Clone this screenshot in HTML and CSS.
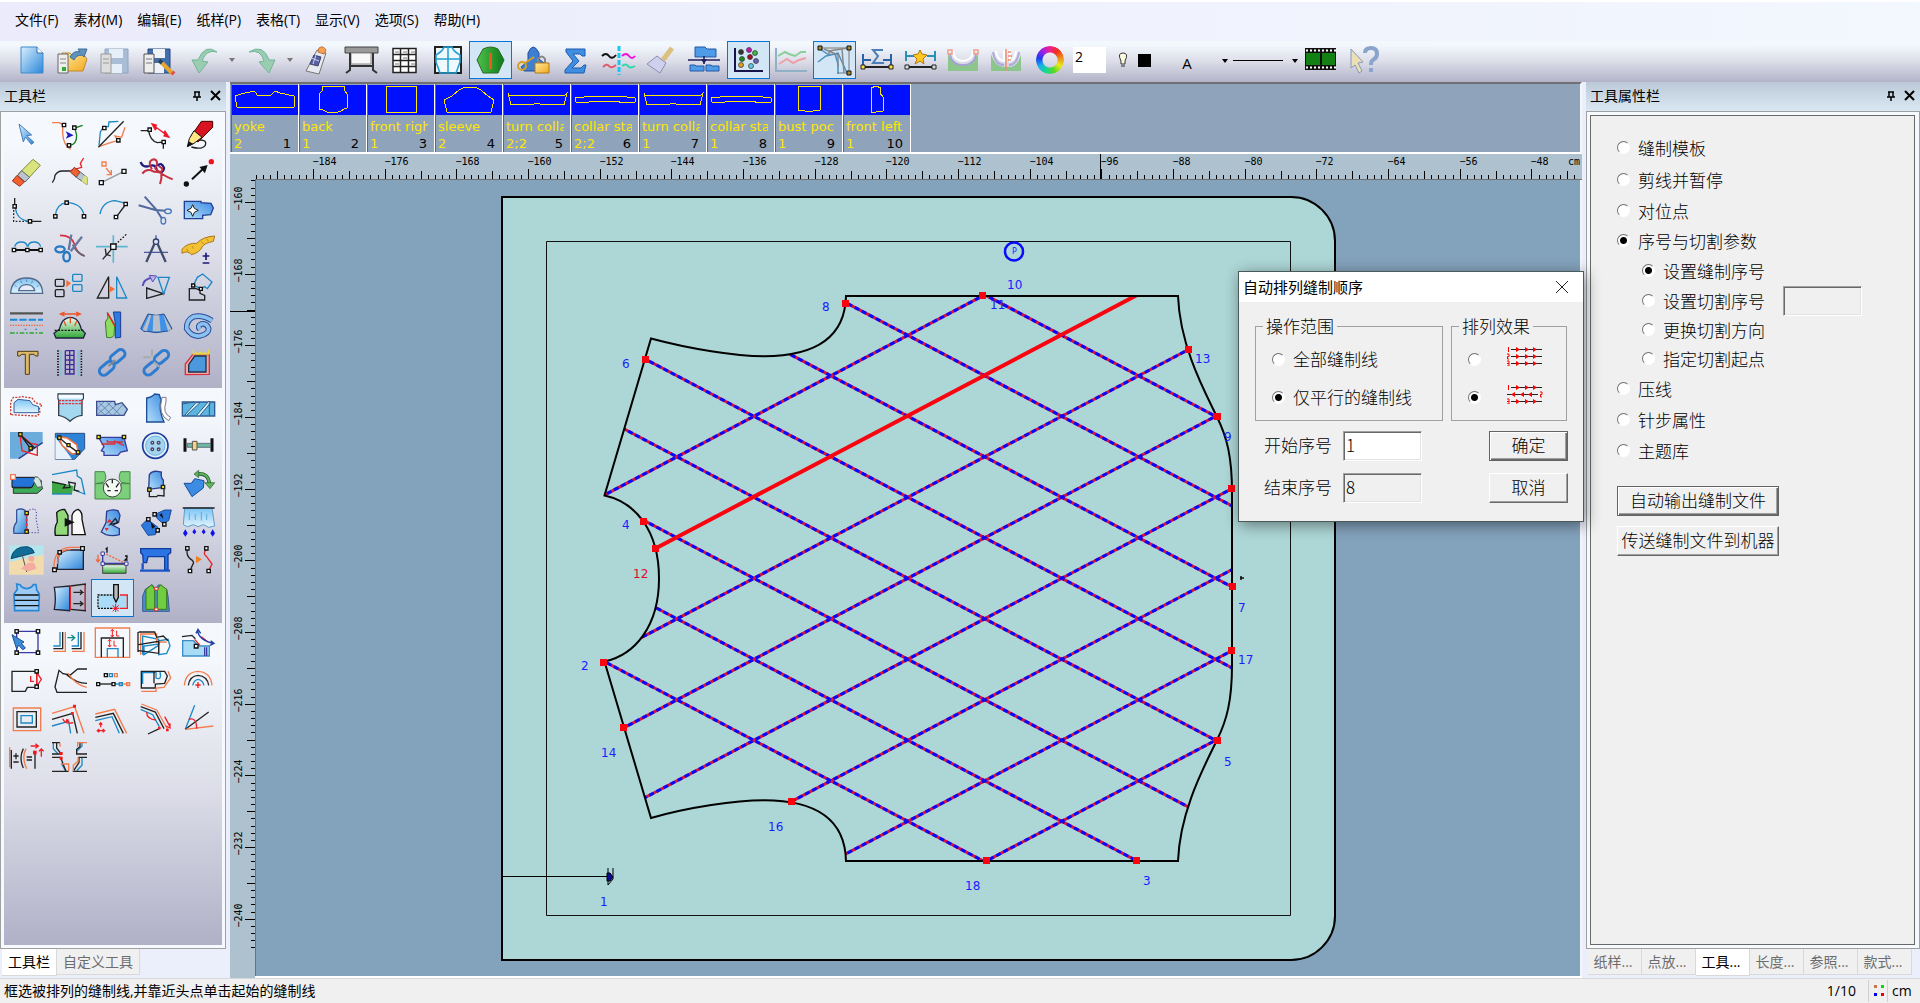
FILE: index.html
```html
<!DOCTYPE html>
<html lang="zh-CN">
<head>
<meta charset="utf-8">
<title>缝制模板</title>
<link rel="stylesheet" href="styles.css">
</head>
<body>
<svg class="defs" width="0" height="0" aria-hidden="true">
  <defs>
    <linearGradient id="blue" x1="0" y1="0" x2="1" y2="1"><stop offset="0" stop-color="#d8effc"/><stop offset="1" stop-color="#2b86dc"/></linearGradient>
    <linearGradient id="deep" x1="1" y1="0" x2="0" y2="1"><stop offset="0" stop-color="#3c8ae4"/><stop offset="1" stop-color="#b4e0f8"/></linearGradient>
    <linearGradient id="sky" x1="0" y1="0" x2="0" y2="1"><stop offset="0" stop-color="#7cc4f4"/><stop offset="1" stop-color="#e2f5fd"/></linearGradient>
    <linearGradient id="green" x1="0" y1="0" x2="0" y2="1"><stop offset="0" stop-color="#f4fbf2"/><stop offset="1" stop-color="#2fa836"/></linearGradient>
    <linearGradient id="grass" x1="0" y1="0" x2="1" y2="0"><stop offset="0" stop-color="#4fc04a"/><stop offset="1" stop-color="#0e7a1c"/></linearGradient>
    <linearGradient id="gold" x1="0" y1="0" x2="1" y2="1"><stop offset="0" stop-color="#ffe9a0"/><stop offset="1" stop-color="#f2a91c"/></linearGradient>
  </defs>
</svg>

<nav class="menubar">
  <a href="#file">文件(F)</a><a href="#material">素材(M)</a><a href="#edit">编辑(E)</a><a href="#pattern">纸样(P)</a><a href="#table">表格(T)</a><a href="#view">显示(V)</a><a href="#option">选项(S)</a><a href="#help">帮助(H)</a>
</nav>

<div class="toolbar">
  <button aria-label="新建"><svg viewBox="9 42 43 38"><path d="M21 48h16l6 6v20H21z" fill="url(#blue)" stroke="#3c8ccc" stroke-width="1"/><path d="M37 48v6h6" fill="#fff" stroke="#3c6ca0" stroke-width="1"/></svg></button>
  <button aria-label="打开"><svg viewBox="52 42 43 38"><path d="M62 54h8l2 2h12l3 4-4 12H66z" fill="url(#gold)" stroke="#c08a2c" stroke-width="1"/><path d="M70 58q4-7 10-5l-2-3h9l-3 8-2-2q-6 0-8 5z" fill="#5f93bd" stroke="#3f6f98" stroke-width="1"/><path d="M58 55h10v19H58z" fill="#eee" stroke="#666" stroke-width="1"/><path d="M60 60h6M60 64h6" stroke="#888" stroke-width="1"/><path d="M62 68h4v4h-4z" fill="#3a3" stroke="none"/></svg></button>
  <button aria-label="保存"><svg viewBox="95 42 43 38"><path d="M105 50h23v24h-23z" fill="#a9bed6" stroke="#8fa4c0" stroke-width="1"/><path d="M109 50h14v9h-14zM110 65h12v9h-12z" fill="#e6eef8" stroke="none"/><path d="M101 55h10v19h-10z" fill="#ddd" stroke="#999" stroke-width="1"/><path d="M103 60h6M103 64h6" stroke="#999" stroke-width="1"/></svg></button>
  <button aria-label="另存"><svg viewBox="138 42 43 38"><path d="M148 50h22v24h-22z" fill="#3f6fae" stroke="#27477c" stroke-width="1"/><path d="M153 50h12v9h-12zM153 64h11v10h-11z" fill="#eef3fa" stroke="none"/><path d="M144 55h10v19h-10z" fill="#eee" stroke="#555" stroke-width="1"/><path d="M146 60h6M146 64h6" stroke="#777" stroke-width="1"/><path d="M159 61l13 13" stroke="#e9a62c" stroke-width="4"/><path d="M159 61l3 3" stroke="#246" stroke-width="4"/><path d="M172 73l2 2" stroke="#e05050" stroke-width="4"/></svg></button>
  <button aria-label="撤销"><svg viewBox="181 42 43 38"><path d="M217 53q-12-9-19 8h-6l7 13 9-11-6-1q4-12 15-9z" fill="#98cdb0" stroke="#74b49a" stroke-width="1"/></svg></button>
  <button class="caret undo-caret" aria-label="撤销列表"><svg viewBox="0 0 8 6"><path d="M1 1h6L4 5z" fill="#777" stroke="none"/></svg></button>
  <button aria-label="重做"><svg viewBox="240 42 43 38"><path d="M249 53q14-9 20 8h6l-6 13-10-11 5-1q-3-12-15-9z" fill="#98cdb0" stroke="#74b49a" stroke-width="1"/></svg></button>
  <button class="caret redo-caret" aria-label="重做列表"><svg viewBox="0 0 8 6"><path d="M1 1h6L4 5z" fill="#777" stroke="none"/></svg></button>
  <button aria-label="数化板"><svg viewBox="297 42 43 38"><path d="M317 51l9 3-7 21-13-3z" fill="#e6e9f0" stroke="#777" stroke-width="1"/><path d="M314 56l7 2-3 9-8-2z" fill="#5660a4" stroke="#446" stroke-width="1"/><path d="M319 49q4-3 7 2l-2 4-6-2z" fill="#f7a354" stroke="#c07030" stroke-width="1"/><path d="M311 59l8 3M316 56l-3 9" stroke="#cfd4ee" stroke-width="1"/></svg></button>
  <button aria-label="绘图仪"><svg viewBox="340 42 43 38"><path d="M345 48h33v6h-33z" fill="#999" stroke="#444" stroke-width="1"/><path d="M351 54h20v11h-20z" fill="#f8f8f8" stroke="#888" stroke-width="1"/><path d="M350 54v17l-4 3M373 54v17l4 3M349 67h25" stroke="#333"/></svg></button>
  <button aria-label="表格"><svg viewBox="383 42 43 38"><path d="M393 49.500h23v24h-23zM400.500 49v25M408.500 49v25M393 55.500h23M393 61.500h23M393 67.500h23" fill="#fff" stroke="#222" stroke-width="1.500"/><path d="M395 53h4M403 53h4M411 53h4M395 65h4M403 59h4M411 65h4" stroke="#777" stroke-width="1"/></svg></button>
  <button aria-label="纸样"><svg viewBox="426 42 43 38"><path d="M435 48h26v26h-26z" fill="#eef8fd" stroke="#222"/><path d="M444 48h8q1 4 8 8v7l-4 11h-16l-4-11v-7q7-4 8-8zM448 48v26M436 60h24" stroke="#22a0d0" stroke-width="1.500"/></svg></button>
  <button class="on" aria-label="单片"><svg viewBox="469 42 43 38"><path d="M483 50q8-4 15 0l6 11-6 13h-15l-6-13z" fill="url(#grass)" stroke="#2a6a20" stroke-width="1"/><path d="M490.500 54v16" stroke="#f2561c" stroke-width="3"/></svg></button>
  <button aria-label="锁定"><svg viewBox="512 42 43 38"><path d="M528 54q5-12 11 0v6l5 4v8h-20l-3-4 7-6z" fill="#3e7fd2" stroke="#1e4f9c" stroke-width="1"/><circle cx="522" cy="67" r="4" fill="none" stroke="#d8a020"/><path d="M525 64l9-6" stroke="#d8a020"/><path d="M538 64v-4q4-5 7 0v4" stroke="#888"/><path d="M535 64h14v10h-14z" fill="url(#gold)" stroke="#b07a18" stroke-width="1"/></svg></button>
  <button aria-label="求和"><svg viewBox="555 42 43 38"><path d="M566 50h19v7h-3l-2-2h-7l6 7-7 7h9l3-3h2l-2 8h-19v-3l8-9-7-9z" fill="#3f8ee0" stroke="#1b5cb0" stroke-width="1"/></svg></button>
  <button aria-label="曲线对称"><svg viewBox="598 42 43 38"><path d="M619 47v29" stroke="#18c8f0" stroke-width="3" stroke-dasharray="5 2"/><path d="M602 57q4-4 7 0t7-1" stroke="#111"/><path d="M622 57q4-4 7 0t6 0" stroke="#f010e0"/><path d="M603 68q4-4 6-1t7-1" stroke="#e05a6c"/><path d="M622 67q4-3 6 0t7 0" stroke="#30d8a8"/></svg></button>
  <button aria-label="刷子"><svg viewBox="641 42 43 38"><path d="M672 49l-9 12" stroke="#dcc080" stroke-width="5"/><path d="M657 57l9 7-6 10-13-9z" fill="#cfd0ee" stroke="#8c8cae" stroke-width="1"/></svg></button>
  <button aria-label="合并"><svg viewBox="684 42 43 38"><path d="M695 48h10l2 2h9v8h-21zM690 66h5l1 1h8v5h-14zM706 66h5l1 1h7v5h-13z" fill="#4e9be8" stroke="#2259a6" stroke-width="1"/><path d="M688 61h32M704 57v8" stroke="#20205c" stroke-width="1.500"/><path d="M701 60h6l-3 5z" fill="#20205c" stroke="none"/></svg></button>
  <button class="on" aria-label="放码点"><svg viewBox="727 42 43 38"><path d="M735 49v23h28" stroke="#15154c"/><g stroke="#333" stroke-width=".7"><circle cx="741" cy="53" r="2.500" fill="#333"/><circle cx="749" cy="51" r="2.500" fill="#c018b0"/><circle cx="755" cy="54" r="2.500" fill="#40b848"/><circle cx="742" cy="60" r="2.500" fill="#188c20"/><circle cx="750" cy="58" r="2.500" fill="#a01028"/><circle cx="756" cy="62" r="2.500" fill="#6860b8"/><circle cx="741" cy="66" r="2.500" fill="#e0a020"/><circle cx="751" cy="67" r="2.500" fill="#60c8e0"/></g></svg></button>
  <button aria-label="线条"><svg viewBox="770 42 43 38"><path d="M776 49v23h31" stroke="#8fb0c6"/><path d="M778 57l7-4 4 2 6 2 6-4h5" stroke="#88cf98"/><path d="M779 65l8-5 6 4 6-3 7-2" stroke="#eea0a8"/></svg></button>
  <button class="on" aria-label="点放码"><svg viewBox="813 42 43 38"><path d="M820 49h29v25h-12" stroke="#777" stroke-width="1"/><path d="M818 63l8-6 9-2 3 10v10M820 50l9 6 9-2 9 20" stroke="#4a90c0" stroke-width="1.500"/><path d="M829 56v-4l19-3M824 50l14 6v12M842 50l2 24" stroke="#888" stroke-width="1.500"/><path d="M818 47h4v4h-4zM847 47h4v4h-4zM847 72h4v4h-4z" fill="#a48c30" stroke="#111" stroke-width="1"/></svg></button>
  <button aria-label="测量"><svg viewBox="856 42 43 38"><path d="M863 55v11M891 55v11M863 61h8M883 61h8" stroke="#2a62a8"/><path d="M883 51h-10l5 6-5 7h11" stroke="#4a7fb8"/><path d="M863 68h28" stroke="#222"/><path d="M861 66h4v4h-4zM889 66h4v4h-4z" fill="#ffe040" stroke="#222" stroke-width="1"/></svg></button>
  <button aria-label="标记"><svg viewBox="899 42 43 38"><path d="M906 52v10M935 52v10M906 57h8M927 57h8" stroke="#2a90b8"/><path d="M920 51l2 4 5 1-4 4 1 5-4-3-5 3 2-5-4-4 5-1z" fill="#ffc820" stroke="#b07810" stroke-width="1"/><path d="M907 68h27" stroke="#222"/><path d="M905 66h4v4h-4zM932 66h4v4h-4z" fill="#ddd" stroke="#222" stroke-width="1"/></svg></button>
  <button aria-label="圆弧"><svg viewBox="942 42 43 38"><path d="M948 55q15 22 30 0v17h-30z" fill="#8cc68c" stroke="none"/><path d="M950 54q1 12 13 12t13-12" stroke="#a8a0d8"/><path d="M953 52q1 10 10 10t10-10" stroke="#fff"/><path d="M948 51h4v4h-4zM974 51h4v4h-4z" stroke="#f0a088" stroke-width="1.500"/></svg></button>
  <button aria-label="剖开圆弧"><svg viewBox="985 42 43 38"><path d="M991 55q4 13 13 13h5q9 0 12-13v17h-30z" fill="#8cc68c" stroke="none"/><path d="M993 53q2 13 11 13M1019 53q-2 13-10 13" stroke="#b0a8dc"/><path d="M996 52q1 9 8 10V51M1016 52q-1 9-6 10V51" stroke="#fff"/><path d="M1006 50v22M1008 53h3M1008 57h4M1008 61h3" stroke="#e89070" stroke-width="1.500"/></svg></button>
  <button aria-label="颜色"><span class="wheel"></span></button>
  <input class="size" type="text" value="2" aria-label="线宽">
  <button class="bulb" aria-label="显示"><svg viewBox="0 0 24 24"><path d="M9 13q-4-8 2-8t2 8v3h-4zM9 18h4" fill="#fdfbe0" stroke="#333" stroke-width="1"/></svg></button>
  <button class="swatch" aria-label="黑色"></button>
  <button class="letter">A</button>
  <button class="linestyle" aria-label="线型"><svg viewBox="1216 42 86 38"><path d="M1222 60h6l-3 4zM1292 60h6l-3 4z" fill="#000" stroke="none"/><path d="M1233 61.500h50" stroke="#000" stroke-width="1"/></svg></button>
  <button aria-label="影片"><svg viewBox="1299 42 43 38"><path d="M1305 49h31v22h-31z" fill="#111" stroke="none"/><path d="M1306 54h14v12h-14zM1322 54h13v12h-13z" fill="#128012" stroke="none"/><path d="M1306 51.500h30M1306 68.500h30" stroke="#fff" stroke-dasharray="2 2"/></svg></button>
  <button aria-label="帮助"><svg viewBox="1342 42 43 38"><path d="M1351 50l12 13-5 1 4 8-3 2-4-8-4 3z" fill="#ece0b4" stroke="#8498b8" stroke-width="1"/><path d="M1365 54q0-5 6-5t6 6q0 4-4 6-2 1-2 5" stroke="#8aa4cc" stroke-width="4"/><path d="M1369 69h4v4h-4z" fill="#8aa4cc" stroke="none"/></svg></button>
</div>

<main class="workspace">
  <section class="side">
    <header class="caption"><h2>工具栏</h2>
      <button aria-label="固定"><svg viewBox="0 0 12 12"><path d="M3 2h6M4 2v5M8 2v5M2 7h8M6 7v4" stroke="#000" stroke-width="1.500"/></svg></button>
      <button aria-label="关闭"><svg viewBox="0 0 12 12"><path d="M2 1l9 9M11 1l-9 9" stroke="#000"/></svg></button>
    </header>
    <div class="frame tools">
      <div class="group">
        <button><svg viewBox="15 108 129 114"><path d="M57 132l38 33-15 2 22 20-8 6-18-22-6 15z" fill="url(#blue)" stroke="#4a7fb8" stroke-width="3"/></svg></button>
        <button><svg viewBox="144 108 129 114"><path class="o" d="M156 128h22l10 6v26q2 36 24 48"/><path class="g" d="M208 196q22 0 22-30l-6-22 24-8"/><path d="M197 154l24 12-24 10 6-10z" fill="#2018c0" stroke="none"/><path class="sq" d="M187 130h10v10h-10zM218 138h10v10h-10zM202 191h10v10h-10z"/></svg></button>
        <button><svg viewBox="273 108 129 114"><path class="b" d="M297 196l4-40 10-16h14l2-14 28-2"/><path class="o" d="M297 200l34-12 22-6-8-14 20 4 10-30"/><path class="k" d="M295 202l76-78"/><path class="sq" d="M308 139h10v10h-10zM350 176h10v10h-10z"/></svg></button>
        <button><svg viewBox="402 108 129 114"><path class="k" d="M422 152h24q4 30 26 36l18-2v20"/><path d="M452 128l20 6-3 6 22 16 4-6 16 25-22-6 4-6-22-17-6 6z" fill="#f01828" stroke="none"/><path class="sq" d="M444 144h10v10h-10zM486 181h10v10h-10z"/></svg></button>
        <button><svg viewBox="531 108 129 114"><path d="M604 124h34v18l-44 44-22-16z" fill="#d81420" stroke="#400" stroke-width="3"/><path d="M582 152l24 20-24 18-20 10 6-24z" fill="#ffe884" stroke="#111" stroke-width="3"/><path d="M566 184l14 8-18 9z" fill="#111"/><path class="k" d="M600 180q22 0 16 16-10 14-42 5"/></svg></button>

        <button><svg viewBox="15 222 129 114"><path d="M99 238l22 18-42 46-24-20z" fill="#d9e47c" stroke="#7c8a3c" stroke-width="3"/><path d="M65 272l24 20-14 14-22-20z" fill="#b9c4d0" stroke="#666" stroke-width="3"/><path d="M51 286l22 20-14 13-22-16z" fill="#f2602c" stroke="#933" stroke-width="3"/></svg></button>
        <button><svg viewBox="144 222 129 114"><path class="k" d="M157 308q8-10 8-22 8-14 24-13h22"/><path class="r" d="M211 272l34-10-4-12 10-16"/><path d="M223 262l18 14-12 16-18-16z" fill="#f2602c" stroke="#733" stroke-width="3"/><path d="M241 276l20 16v22l-32-22z" fill="#b9c4d0" stroke="#666" stroke-width="3"/><path d="M254 286l7 6v22l-16-10z" fill="#d9e47c" stroke="none"/></svg></button>
        <button><svg viewBox="273 222 129 114"><path d="M304 308l68-34" stroke="#999"/><path class="sq" d="M298 302h12v12h-12zM366 268h12v12h-12z"/><path class="o" d="M306 246h12v12h-12zM318 264l16 20M334 270v14h-14"/></svg></button>
        <button><svg viewBox="402 222 129 114"><path d="M422 246q6 18 26 12 20-8 24 16 18 8 20-10-8-20-20-6" stroke="#20187c" stroke-width="7"/><path d="M427 281q10-14 26-10 14 8 30 4 10-8-6-16M456 268q-16-26 6-30 16 4 4 28 20 20 52 32M484 282v14l-4 16" stroke="#c83040" stroke-width="6"/></svg></button>
        <button><svg viewBox="531 222 129 114"><path d="M576 298l32-30" stroke="#111" stroke-width="6"/><path d="M602 262l18-4-6 18z" fill="#111" stroke="#111"/><circle cx="559" cy="312" r="8" fill="#111" stroke="none"/><circle cx="634" cy="245" r="8" fill="#f01020" stroke="none"/></svg></button>

        <button><svg viewBox="15 336 129 114"><path class="k" d="M44 354v26M90 424h34"/><path d="M41 390v34h42" stroke="#222" stroke-width="4" stroke-dasharray="5 5"/><path class="b" d="M46 384q4 34 38 40"/><path class="sq" d="M39 374h10v10H39zM85 419h10v10H85z"/></svg></button>
        <button><svg viewBox="144 336 129 114"><path class="b" d="M166 406q4-34 34-38 46 2 52 38"/><path class="sq" d="M161 404h10v10h-10zM195 363h10v10h-10zM247 404h10v10h-10z"/></svg></button>
        <button><svg viewBox="273 336 129 114"><path class="b" d="M300 402q8-38 46-40l32 8"/><path class="k" d="M378 372l-30 40"/><path class="sq" d="M372 367h10v10h-10zM343 406h10v10h-10z"/></svg></button>
        <button><svg viewBox="402 336 129 114"><path d="M416 376l50 14 30 2M434 350l34 38 18 28" stroke="#50689c" stroke-width="6"/><ellipse cx="504" cy="394" rx="10" ry="7" stroke="#4878b8"/><ellipse cx="490" cy="422" rx="7" ry="10" stroke="#4878b8"/></svg></button>
        <button><svg viewBox="531 336 129 114"><path d="M553 364h50v4l30 2 7 14-8 20-24 2v10h-55z" fill="url(#deep)" stroke="#1f3f94" stroke-width="4"/><path d="M578 374l5 11 12 6-12 6-5 12-5-12-12-6 12-6z" fill="#fff" stroke="#222" stroke-width="3"/></svg></button>

        <button><svg viewBox="15 450 129 114"><path class="b" d="M44 500q4-14 20-14t18 14M84 500q2-14 18-14t20 14"/><path d="M42 510h80" stroke="#111" stroke-width="6"/><path class="sq" d="M37 505h10v10H37zM77 505h10v10H77zM117 505h10v10h-10z"/></svg></button>
        <button><svg viewBox="144 450 129 114"><path d="M180 466q36 0 44 28 4 24 30 34" stroke="#d83040" stroke-width="5"/><path d="M218 494q14 28 36 34" stroke="#606878" stroke-width="5"/><path d="M214 464l-8 46M246 470l-34 44" stroke="#6878a0" stroke-width="7"/><ellipse cx="180" cy="508" rx="14" ry="9" stroke="#2878c0" stroke-width="7"/><ellipse cx="200" cy="530" rx="10" ry="14" stroke="#2878c0" stroke-width="7"/></svg></button>
        <button><svg viewBox="273 450 129 114"><path d="M340 466v82M288 500h95" stroke="#5cb8d0" stroke-width="5"/><path d="M346 494l34-32" stroke="#111" stroke-dasharray="5 5"/><path class="k" d="M336 506l-28 32M316 506l2 16 14 6"/><path class="sq" d="M332 492h16v16h-16z"/></svg></button>
        <button><svg viewBox="402 450 129 114"><path d="M468 466v14M432 517h72" stroke="#485898"/><circle cx="468" cy="485" r="8" stroke="#304070"/><path d="M463 492l-24 54M473 492l24 54" stroke="#404c6c" stroke-width="7"/></svg></button>
        <button><svg viewBox="531 450 129 114"><path d="M546 508q16-20 44-18 18-20 54-22l-4 16q-26 6-32 14-8 20-34 26-10-14-28-4z" fill="#f4c034" stroke="#a87818" stroke-width="3"/><path d="M560 506l4 8M576 498l4 8M604 484l6 8M620 476l5 8" stroke="#a87818" stroke-width="2"/><path d="M618 518v22M608 528h20M608 549h20" stroke="#201878" stroke-width="5"/></svg></button>

        <button><svg viewBox="15 564 129 114"><path d="M32 640q2-46 48-46t48 46z" fill="url(#sky)" stroke="#53688c" stroke-width="4"/><path d="M56 632q4-18 24-18t24 18z" fill="#e8eef8" stroke="#53688c" stroke-width="4"/><path d="M44 616l6 4M62 602l4 8M80 598v8M98 602l-4 8M116 616l-6 4" stroke="#53688c" stroke-width="2"/></svg></button>
        <button><svg viewBox="144 564 129 114"><rect class="k" x="166" y="598" width="26" height="21" rx="3"/><rect class="k" x="166" y="629" width="26" height="21" rx="3"/><rect class="b" x="218" y="583" width="28" height="21" rx="3"/><rect class="b" x="218" y="614" width="28" height="20" rx="3"/><path d="M199 600l14 10-14 12z" fill="#f86c34" stroke="none"/></svg></button>
        <button><svg viewBox="273 564 129 114"><path class="k" d="M326 590v64h-34z"/><path class="b" d="M350 590v64h30z"/><path d="M330 618l15 9-15 10z" fill="#f86c34" stroke="none"/></svg></button>
        <button><svg viewBox="402 564 129 114"><path d="M428 618q2-20 30-26" stroke="#5850b8" stroke-width="6"/><path d="M448 586l22 2-12 18z" fill="#b8b0e8" stroke="#5850b8" stroke-width="3"/><path class="k" d="M440 624l50 17-50 14z"/><path class="b" d="M474 592h34l-17 50z"/></svg></button>
        <button><svg viewBox="531 564 129 114"><path class="b" d="M604 626l-24-10 12-24 16-10 28 24-14 20-8-6z"/><path class="k" d="M568 626h20l12 4v10l14 6v14h-46z"/><path class="sq" d="M575 612h9v9h-9zM598 622h9v9h-9z"/></svg></button>

        <button><svg viewBox="15 678 129 114"><path d="M30 700h99" stroke="#555" stroke-width="7"/><path d="M30 719h99" stroke="#1c88d8" stroke-width="6" stroke-dasharray="22 6"/><path d="M30 736h99" stroke="#f06030" stroke-width="4" stroke-dasharray="4 4"/><path d="M74 748h5M106 748h5" stroke="#1c88d8" stroke-width="4"/><path d="M30 759h99" stroke="#2ca830" stroke-width="5" stroke-dasharray="14 5 5 5"/></svg></button>
        <button><svg viewBox="144 678 129 114"><path d="M162 760l16-12q6-24 16-30 18-12 34 0 10 8 16 30l12 12-6 14h-82z" fill="url(#green)" stroke="#224" stroke-width="4"/><path d="M164 751h88" stroke="#111" stroke-dasharray="6 4"/><path d="M184 702h54M194 696l-13 6 13 6M228 696l13 6-13 6M211 712v18M192 724l6 14M230 724l-6 14" stroke="#f25020" stroke-width="4"/></svg></button>
        <button><svg viewBox="273 678 129 114"><path d="M340 696h22v76l-16 2V730z" fill="#2c7ce4" stroke="#1c3c8c" stroke-width="3"/><path d="M322 698l2 16-8 12 4 46q16 4 22-6l2-34z" fill="#90dc5c" stroke="#3a7c2c" stroke-width="3"/><path d="M322 698l22 40" class="r"/></svg></button>
        <button><svg viewBox="402 678 129 114"><path d="M444 702q26 8 48 0l24 44q-14 10-20 8-28 8-54 0-10 4-20-8z" fill="#3f90e8" stroke="#264c8c" stroke-width="3"/><path d="M460 706l-2 48h24l-4-48zM448 704l-20 46 12 4 14-48zM490 704l14 50 10-6z" fill="#b8bec8" stroke="none"/></svg></button>
        <button><svg viewBox="531 678 129 114"><path d="M636 722q-28-18-56-12-22 12-20 36 14 24 38 22 28-6 28-22-6-18-22-14-14 6-4 16" stroke="#264c9c" stroke-width="17"/><path d="M636 722q-28-18-56-12-22 12-20 36 14 24 38 22 28-6 28-22-6-18-22-14-14 6-4 16" stroke="#8cc0ee" stroke-width="11"/></svg></button>

        <button><svg viewBox="15 792 129 114"><path d="M53 814h61v14h-8l-4-5H88v60H76v-60H64l-4 5h-7z" fill="#dcb868" stroke="#4c3c14" stroke-width="3"/></svg></button>
        <button><svg viewBox="144 792 129 114"><path d="M174 811v76M244 811v76" stroke="#111" stroke-width="5" stroke-dasharray="4 4"/><path d="M182 811v76M236 811v76" stroke="#8fbfd4" stroke-width="9"/><path d="M196 812h26v14h-26v14h26v14h-26v14h26v14h-26M196 812v72M222 812v72M209 812v72" stroke="#3c2c98" stroke-width="4"/></svg></button>
        <button><svg viewBox="273 792 129 114"><rect x="328" y="817" width="50" height="26" rx="13" transform="rotate(-40 352 830)" stroke="#2e7cd0" stroke-width="9"/><rect x="296" y="852" width="50" height="26" rx="13" transform="rotate(-40 321 866)" stroke="#2e7cd0" stroke-width="9"/><path d="M326 858l20-18" stroke="#888" stroke-width="6"/></svg></button>
        <button><svg viewBox="402 792 129 114"><rect x="460" y="817" width="48" height="26" rx="13" transform="rotate(-40 486 830)" stroke="#2e7cd0" stroke-width="9"/><rect x="430" y="852" width="48" height="26" rx="13" transform="rotate(-40 454 866)" stroke="#2e7cd0" stroke-width="9"/><path d="M430 832h22M456 808v20M462 846l16 14" stroke="#aaa" stroke-width="6"/></svg></button>
        <button><svg viewBox="531 792 129 114"><path d="M556 884v-32l22-28h50v59z" fill="#f0a8a0" stroke="#d83040"/><path d="M566 876v-22l18-26h34v48z" fill="#4c98dc" stroke="#20304c" stroke-width="4"/><path d="M580 808v14h46v-14M586 816l8 6 8-6 8 6 8-6" stroke="#e8d840" stroke-width="4"/></svg></button>
      </div>
      <div class="group">
        <button><svg viewBox="15 27 129 114"><path d="M32 104V66l8-14h16l10-2 30 4 10 14 20 6-8 12 2 14-10 8z" stroke="#c8382c" stroke-width="4" stroke-dasharray="6 4"/><path d="M42 98V68l12-10 36 4 8 12 18 6v18z" fill="url(#sky)" stroke="#3c5c9c" stroke-width="3"/></svg></button>
        <button><svg viewBox="144 27 129 114"><path d="M174 42h76v14l-4 4v46q-20 2-36 18-14-14-34-18V60l-2-4z" fill="#a4d8f0" stroke="#34404c" stroke-width="4"/><path d="M176 44h72v12h-72z" fill="#f4fafd" stroke="none"/><path d="M176 62h72M176 71h72" stroke="#e03040" stroke-width="4" stroke-dasharray="7 3"/></svg></button>
        <button><svg viewBox="273 27 129 114"><path d="M290 64h54l2 10 20-6 8 10 8 10-10 18h-82z" fill="#a8c8e4" stroke="#3c4c8c" stroke-width="4"/><path d="M292 84l22-20M292 104l42-38M314 106l36-32M340 106l30-34M296 66l40 40M320 66l42 40M292 84l24 22" stroke="#486c9c" stroke-width="2"/></svg></button>
        <button><svg viewBox="402 27 129 114"><path d="M440 54q16-2 24-12l14 2q2 10 6 14-10 30 8 68h-52z" fill="url(#deep)" stroke="#1c4c94" stroke-width="4"/><path d="M486 52h12v14q-12 34 14 46l-6 10q-34-18-20-70z" fill="#fff" stroke="#778" stroke-width="3"/></svg></button>
        <button><svg viewBox="531 27 129 114"><path d="M547 66h97v42h-97z" fill="#5cb4e0" stroke="#2c5c94" stroke-width="4"/><path d="M560 106l40-38h-12l-34 38zM590 106l36-42 8 2-34 40M546 72l36-6M628 66v40" fill="#d4f0fa" stroke="#345c84" stroke-width="3"/></svg></button>

        <button><svg viewBox="15 141 129 114"><path d="M30 156h98v32l-72 48H30z" fill="#6cacdc" stroke="none"/><path d="M56 236l72-48" stroke="#2c3c8c"/><path class="r" d="M60 164l6 48 46 14v-32l-20-4z"/><path class="k" d="M64 168l28 38M64 168l40 36"/><path class="y" d="M56 158h10v10H56zM87 200h10v10H87z"/></svg></button>
        <button><svg viewBox="144 141 129 114"><path d="M166 160h88v46l-30 32h-58z" fill="#2c84d8" stroke="#2c4c84" stroke-width="3"/><path d="M166 172q40 50 50 66h-50z" fill="#e8f2fa" stroke="none"/><path d="M176 170l10 26 30 26 20-2-6-26-28-20z" fill="#fff" stroke="#f07040" stroke-width="5"/><path class="k" d="M178 173l28 24 28 20"/><path class="y" d="M173 168h10v10h-10zM201 191h9v9h-9zM229 212h10v10h-10z"/></svg></button>
        <button><svg viewBox="273 141 129 114"><path d="M296 172h76l6 24 4 16-20 4-8 10h-42v-10l-8-4 8-12z" fill="url(#deep)" stroke="#3c3c9c" stroke-width="4"/><path d="M304 192h40v-8l28 12M368 186h-46v-6" stroke="#d83038" stroke-width="4"/><path class="y" d="M291 166h10v10h-10zM367 166h10v10h-10z"/></svg></button>
        <button><svg viewBox="402 141 129 114"><circle cx="466" cy="197" r="38" fill="#e4f0fa" stroke="#1c3c9c" stroke-width="5"/><circle cx="466" cy="197" r="29" fill="#a4d4f0" stroke="#6cb4e0" stroke-width="3"/><g fill="#dde" stroke="#446" stroke-width="4"><circle cx="457" cy="188" r="4"/><circle cx="476" cy="188" r="4"/><circle cx="457" cy="208" r="4"/><circle cx="476" cy="208" r="4"/></g></svg></button>
        <button><svg viewBox="531 141 129 114"><path d="M555 175v40M636 175v40" stroke="#111" stroke-width="9"/><path d="M562 190h70v12h-70z" fill="#6cb8a0" stroke="#446" stroke-width="2"/><path d="M577 184h14v26h-14z" fill="#f4d47c" stroke="#555" stroke-width="3"/></svg></button>

        <button><svg viewBox="15 255 129 114"><path d="M40 340v-16h52l18-30 14 8q-2 16 4 24l-16 14z" fill="#3cac58" stroke="#333" stroke-width="3"/><path d="M36 292h76l-16 30H36z" fill="#2474d8" stroke="#111" stroke-width="3"/><path d="M106 290q16 0 20 30l-14 2-12-20z" fill="#cfe8e0" stroke="#666" stroke-width="3"/><path d="M32 284h14v14H32z" fill="#fff" stroke="#f07850" stroke-width="4"/></svg></button>
        <button><svg viewBox="144 255 129 114"><path d="M156 304l64 14-4 24h-60z" fill="#3fa846" stroke="none"/><path class="b" d="M156 284l74-14 2 18 12 8 10 46-32-12"/><path d="M156 306l40 8-6 10 20-2-4-16 20 4-4 20 16 4" class="k"/><path class="b" d="M156 342h60"/></svg></button>
        <button><svg viewBox="273 255 129 114"><path d="M285 275h28q10 20-2 32l-26 4zM390 275h-28q-10 20 2 32l26 4zM285 311h26q6 40 26 40t26-40h27v46H285z" fill="#7cd07c" stroke="#484" stroke-width="3"/><circle cx="337" cy="324" r="27" fill="#f4fbf4" stroke="#444" stroke-width="3"/><path class="k" d="M337 298v12M318 310l8 12M356 310l-8 12M322 332h10M344 332h10"/></svg></button>
        <button><svg viewBox="402 255 129 114"><path d="M448 284q8-12 24-10l12 2q-2 18 6 24v22l-44 6z" fill="url(#deep)" stroke="#2c3c8c" stroke-width="4"/><path d="M448 330v20h22l4-4 18 2v-24" class="k"/><path class="y" d="M443 324h10v10h-10zM484 316h10v10h-10z"/></svg></button>
        <button><svg viewBox="531 255 129 114"><path d="M552 310l22 0 10-14 28 6-2 22-34 26z" fill="#3c8ce4" stroke="#1c4c9c" stroke-width="3"/><path d="M592 282q34-4 36 30" stroke="#2c5c30" stroke-width="11"/><path d="M592 282q34-4 36 30" stroke="#5cb45c" stroke-width="6"/><path d="M614 308h30l-14 18zM596 271l-14 11 14 11z" fill="#5cb45c" stroke="#2c5c30" stroke-width="2"/></svg></button>

        <button><svg viewBox="15 369 129 114"><path d="M50 390q12-6 24 0l6 12v58H42q-4-20 8-34z" fill="url(#blue)" stroke="#34549c" stroke-width="4"/><path d="M80 402v54" stroke="#f03030" stroke-width="6" stroke-dasharray="8 6"/><path d="M88 390l16-4 6 14-2 14 8 44H88" stroke="#4444a8" stroke-width="3" stroke-dasharray="4 5"/><path class="y" d="M75 394h10v10H75zM75 450h10v10H75z"/></svg></button>
        <button><svg viewBox="144 369 129 114"><path d="M170 398q8-10 24-10l10 18v60h-38q-4-24 6-40z" fill="#90d878" stroke="#111" stroke-width="4"/><path d="M216 406q4-14 18-18 14 6 12 30 6 30 10 46h-40z" fill="#f8f8f8" stroke="#111" stroke-width="4"/><path d="M194 414l30 13-30 13z" fill="#111" stroke="none"/></svg></button>
        <button><svg viewBox="273 369 129 114"><path d="M320 394q16-8 34-2l6 14-4 20-18 10 20 10v18q-20 6-40 0l-14-8 14-28z" fill="url(#deep)" stroke="#2c3c8c" stroke-width="4"/><path d="M320 428l8-12 8 10zM314 444h12l-6 10z" fill="#e82830" stroke="none"/><path class="k" d="M330 434l16-18 8 12z"/></svg></button>
        <button><svg viewBox="402 369 129 114"><path d="M472 400l22-10 20 0-8 32-18 8-18-16zM424 436l18-18 32 24-8 22-22 2z" fill="#2c78dc" stroke="#1c4c9c" stroke-width="3"/><path d="M452 426l14 14-10 6zM478 404l12 12-4-16z" fill="#111"/><path class="sq" d="M440 413h10v10h-10zM459 398h10v10h-10zM488 428h10v10h-10zM468 446h10v10h-10z"/></svg></button>
        <button><svg viewBox="531 369 129 114"><path d="M554 384h82l8 54-18 4-16-8-16 6-14-6-18 6-12-6z" fill="url(#sky)" stroke="#5c9cc8" stroke-width="3"/><path d="M548 384h96" class="k"/><path d="M568 398v22M586 402v18M604 396v26M620 402v18" stroke="#5cacdc" stroke-width="3"/><path d="M556 448l7 12-7 10-7-10zM583 446l6 10-6 7-6-7zM611 446l6 10-6 7-6-7zM638 448l7 12-7 10-7-10z" fill="#1010f0" stroke="none"/></svg></button>

        <button><svg viewBox="15 483 129 114"><path d="M27 496h104v50H27z" fill="#b4e4ec" stroke="none"/><path d="M27 546l104-22v60H27z" fill="#f2dcae" stroke="none"/><path d="M33 536q6-38 50-36 16 4 20 18z" fill="#106c98" stroke="#0c4868" stroke-width="3"/><path d="M66 522l14 54" stroke="#555" stroke-width="3"/><circle cx="94" cy="536" r="9" fill="#f4aca0" stroke="none"/><path d="M62 566l22-18h18l8 18-24 8z" fill="#f4aca0" stroke="none"/></svg></button>
        <button><svg viewBox="144 483 129 114"><path d="M172 568l2-36q10-20 30-22h46v58z" fill="url(#blue)" stroke="#223" stroke-width="4"/><path d="M162 568q-2-64 48-66h36M172 552q0-44 40-44" stroke="#f07850" stroke-width="4"/><path class="sq" d="M174 512h10v10h-10zM242 500h11v11h-11zM158 564h11v11h-11z"/></svg></button>
        <button><svg viewBox="273 483 129 114"><path d="M308 554h70v26h-70z" fill="url(#green)" stroke="#444" stroke-width="3"/><path d="M294 524v20M288 538l6 8 6-8" stroke="#f06838"/><path d="M310 518l66 32" stroke="#f06838" stroke-dasharray="6 4"/><path d="M308 524v26h70" class="n"/><path d="M317 508l4-4v14M375 528h6v6l-6 6h8" stroke="#111" stroke-width="4"/><path d="M303 516h10v10h-10zM303 546h10v10h-10zM374 546h10v10h-10z" fill="#fff" stroke="#3a3aa0" stroke-width="3"/></svg></button>
        <button><svg viewBox="402 483 129 114"><path d="M422 506h90v12l-8 6v46h-10v-40h-50l-4 18h-10l-2-24-6-6z" fill="#2c74e4" stroke="#123c9c" stroke-width="4"/><path d="M420 572h90M428 550v18" stroke="#1c54c8" stroke-width="7"/></svg></button>
        <button><svg viewBox="531 483 129 114"><path class="k" d="M562 506q-4 20 8 30 16 10 8 18l-8 18"/><path class="r" d="M620 508q-14 12 0 22l16 22-10 20"/><path d="M588 528l18 10-18 12z" fill="#f08020" stroke="none"/><path class="sq" d="M557 500h10v10h-10zM614 500h10v10h-10zM565 568h10v10h-10zM621 568h10v10h-10z"/></svg></button>

        <button><svg viewBox="15 597 129 114"><path d="M50 612l10 2q4 10 20 12 16-2 20-12h8l2 16 8 12-2 50H44l-2-50 10-14z" fill="#9cccf4" stroke="#2888d8" stroke-width="5"/><path d="M44 645h72M44 661h72M44 677h72" stroke="#111"/></svg></button>
        <button><svg viewBox="144 597 129 114"><path d="M163 622l46-4v74l-46-4q6-32 0-66z" fill="url(#blue)" stroke="#223" stroke-width="4"/><path d="M211 618l45-6v80l-45-4" class="k"/><path d="M211 618v72M256 616v74" class="r"/><path d="M220 637h28l-8-7M248 637l-8 7M220 671h28l-8-7M248 671l-8 7" class="k"/></svg></button>
        <button class="on"><svg viewBox="273 597 129 114"><path d="M296 646h84v40h-84z" fill="#a8dcf8" stroke="none"/><path d="M344 645h-50v40h42" stroke="#111" stroke-dasharray="6 3"/><path class="r" d="M360 645h22v40h-22"/><path d="M341 614h14v38l-7 14-7-14z" fill="#bbb" stroke="#111" stroke-width="4"/><path d="M347 672v24M338 676l18 18M356 676l-18 18M336 685h22" stroke="#f01828" stroke-width="3"/></svg></button>
        <button><svg viewBox="402 597 129 114"><path d="M428 694v-46l8-20 20-14 10 12 10-12 24 14 4 20 4 46z" fill="#4c8cc8" stroke="#345c94" stroke-width="3"/><path d="M438 688v-60l18-14 8 14v60zM472 688v-60l10-14 18 14v60z" fill="#70cc40" stroke="#38781c" stroke-width="3"/><path d="M464 622h10v8h-10zM464 684h10v8h-10z" fill="#fff" stroke="#e83030" stroke-width="3"/></svg></button>
      </div>
      <div class="group rest">
        <button><svg viewBox="15 12 129 114"><path class="n" d="M50 34h64v64H50z"/><path class="sq" d="M45 29h10v10H45zM109 29h10v10h-10zM45 93h10v10H45zM109 93h10v10h-10z"/><path d="M36 44l36 22-8 4 12 14-8 5-12-14-6 12z" fill="#3c8cd8" stroke="#1c4c94" stroke-width="3"/></svg></button>
        <button><svg viewBox="144 12 129 114"><path class="b" d="M180 36v42h-20M235 36v42h-20"/><path class="k" d="M188 36v50h-28M243 36v50h-28"/><path class="o" d="M196 36v58h-36M252 36v58h-36"/><path d="M202 53h20M214 45l10 8-10 9" stroke="#148888"/></svg></button>
        <button><svg viewBox="273 12 129 114"><path class="o" d="M286 24h103v88H286z"/><path class="k" d="M304 112V54h66v58"/><path class="b" d="M322 112V86h32v26"/><path d="M337 28v22M332 34l5-6 5 6M332 45l5 6 5-6M329 58v22M324 64l5-6 5 6M324 75l5 6 5-6M350 32v16h8M342 62v16h8" stroke="#f02020" stroke-width="3"/></svg></button>
        <button><svg viewBox="402 12 129 114"><path class="b" d="M428 104V48l48 10v20M476 76l4-14 24-4 6 20-10 22-24 4V72l-44 6v26z"/><path class="o" d="M422 104V42h48v24h30"/><path class="k" d="M416 36h48l6 16 20-4 14 14M414 96V36M416 74l60-10v36l-60-8"/></svg></button>
        <button><svg viewBox="531 12 129 114"><path d="M548 62h32l16 16h32v30h-80z" fill="#a8dcf4" stroke="#3c8cc8"/><path class="k" d="M546 50l30-4 10 10"/><path class="r" d="M584 58l16 18M604 50l20 16"/><path d="M592 32q6 30 48 38M588 40l6-12 8 12M632 62l10 8-12 6" stroke="#1c3ca0"/><path class="sq" d="M583 73h11v11h-11z"/><path d="M614 82v26M620 82v26" class="n"/></svg></button>

        <button><svg viewBox="15 126 129 114"><path class="k" d="M36 154h74v40l-2 8H82l-6 12H36z"/><path class="r" d="M110 158v40M112 160l12 18-12 18M92 168v16h10"/><path class="sq" d="M105 149h10v10h-10zM105 195h10v10h-10z"/></svg></button>
        <button><svg viewBox="144 126 129 114"><path class="k" d="M261 217h-90l-6-16 12-50 12 10 22 4 22-18h28M200 164q30 26 61 26"/><path class="o" d="M204 160q24 36 56 42"/></svg></button>
        <button><svg viewBox="273 126 129 114"><path d="M294 192h46" class="k"/><path d="M340 192h22" class="b"/><path d="M362 192h24" class="o"/><path class="sq" d="M313 161h9v9h-9zM290 188h9v9h-9zM336 188h9v9h-9z"/><path class="b" d="M328 161h9v9h-9zM358 188h9v9h-9z"/><path class="o" d="M343 161h9v9h-9zM380 188h9v9h-9z"/></svg></button>
        <button><svg viewBox="402 126 129 114"><path class="b" d="M428 192v-34h40v16q18 8 12-18"/><path class="k" d="M424 154h70l8 14-8 22-28 2v12h-42zM462 156v34"/><path class="o" d="M424 214h44v-10l24-2 20-28-8-20"/></svg></button>
        <button><svg viewBox="531 126 129 114"><path class="o" d="M553 196q4-40 41-42 38 2 42 42"/><path class="k" d="M565 196q4-28 29-30 28 2 32 30"/><path class="b" d="M578 196q4-16 16-18 14 2 18 18"/><path class="r" d="M594 186v18M586 195h16"/></svg></button>

        <button><svg viewBox="15 240 129 114"><path class="o" d="M40 264h82v68H40z"/><path class="k" d="M51 275h58v46H51z"/><path class="b" d="M63 287h34v22H63z"/></svg></button>
        <button><svg viewBox="144 240 129 114"><path class="o" d="M156 280l68-20 28 80"/><path class="k" d="M156 298l62-18 14 60"/><path class="b" d="M156 318l50-14 6 36"/><path class="r" d="M188 296q8 18 32 12"/><path d="M219 254h9v9h-9zM213 276h8v8h-8zM198 298h8v8h-8z" fill="#f02020" stroke="none"/></svg></button>
        <button><svg viewBox="273 240 129 114"><path class="o" d="M286 282l58-14 36 72"/><path class="k" d="M286 292l54-12 30 60"/><path class="b" d="M286 302l50-12 22 50"/><path d="M302 308v14M297 314l5-6 5 6M292 332h22M298 327l-6 5 6 5M308 327l6 5-6 5" class="r"/></svg></button>
        <button><svg viewBox="402 240 129 114"><path class="o" d="M424 252l46 18 34 60"/><path class="k" d="M422 260l44 16 26 50M444 342l34-16"/><path class="b" d="M422 268l36 16 20 36"/><path class="r" d="M440 276q0 22 28 24M494 290l16 30M510 310v14l-12-6"/><path d="M474 320h8v8h-8zM498 326h8v8h-8z" fill="#f02020" stroke="none"/></svg></button>
        <button><svg viewBox="531 240 129 114"><path class="b" d="M556 328l28-72"/><path class="k" d="M556 328l70-52"/><path class="o" d="M556 328l84-10"/><path class="r" d="M566 298q24-8 24 28"/></svg></button>

        <button><svg viewBox="15 354 129 114"><path class="o" d="M29 382v60M78 386q-14 26 2 60"/><path class="k" d="M34 390v56M40 408h16M48 400v18M40 426h16M70 386q-14 28 0 58M80 411h16M80 420h16M105 400v46"/><path class="r" d="M92 378h22M106 371l9 7-9 7M124 388v22M117 394l7-7 7 7"/><path d="M99 392h11v11H99z" fill="#f01818" stroke="none"/></svg></button>
        <button><svg viewBox="144 354 129 114"><path class="b" d="M160 368v18l14 16M184 430l14 24M246 368v10l-14 14M246 412v24l-16 16"/><path class="k" d="M156 368h24M170 368v16l12 16M156 402h26M156 412h26l8 22 8 20M156 454h50M240 368v12l-10 8v14h31M261 412h-24v16l-16 24M218 454h43"/><path class="o" d="M180 368v12M184 432h22v22M261 368h-28v12M234 412v12l-14 12v18"/><path d="M179 396h9v9h-9zM179 410h9v9h-9z" fill="#f01818" stroke="none"/></svg></button>
      </div>
    </div>
    <div class="tabs"><button class="current">工具栏</button><button>自定义工具</button></div>
  </section>

  <section class="center">
    <div class="strip">
      <figure><svg viewBox="0 0 66 30"><path d="M3 11L9 9 22 6l2 2 1 2 6 1 8-1 4-4 5 2 14 3 1 1-1 10H5z"/></svg><figcaption>yoke</figcaption><p><span>2</span><b>1</b></p></figure>
      <figure><svg viewBox="0 0 66 30"><path d="M23 1h21l1 5 2 3v14l-3 1-3 2-3 1H27l-4-2-4-1V9l3-3z"/></svg><figcaption>back</figcaption><p><span>1</span><b>2</b></p></figure>
      <figure><svg viewBox="0 0 66 30"><path d="M18 1h30v26H18z"/></svg><figcaption>front right</figcaption><p><span>1</span><b>3</b></p></figure>
      <figure><svg viewBox="0 0 66 30"><path d="M8 15l8-4 7-6 6-3h10l6 3 7 6 6 4-3 12H11z"/></svg><figcaption>sleeve</figcaption><p><span>2</span><b>4</b></p></figure>
      <figure><svg viewBox="0 0 66 30"><path d="M4 8l1 2h56l2-2-3 12-10-1H36l-3-1-3 1-23 1z"/></svg><figcaption>turn collar</figcaption><p><span>2;2</span><b>5</b></p></figure>
      <figure><svg viewBox="0 0 66 30"><path d="M3 13l9-1 5-1h33l5 1 8 1v4l-13 1-5-2H21l-4 1H4z"/></svg><figcaption>collar stand</figcaption><p><span>2;2</span><b>6</b></p></figure>
      <figure><svg viewBox="0 0 66 30"><path d="M4 8l1 2h56l2-2-3 12-10-1H36l-3-1-3 1-23 1z"/></svg><figcaption>turn collar</figcaption><p><span>1</span><b>7</b></p></figure>
      <figure><svg viewBox="0 0 66 30"><path d="M3 13l9-1 5-1h33l5 1 8 1v4l-13 1-5-2H21l-4 1H4z"/></svg><figcaption>collar stand</figcaption><p><span>1</span><b>8</b></p></figure>
      <figure><svg viewBox="0 0 66 30"><path d="M22 1h22v24l-7 1-4 1-4-1-7-1z"/></svg><figcaption>bust poc</figcaption><p><span>1</span><b>9</b></p></figure>
      <figure><svg viewBox="0 0 66 30"><path d="M27 3l5-2 5 2-1 5 3 4v14l-7 1h-5z"/></svg><figcaption>front left</figcaption><p><span>1</span><b>10</b></p></figure>
    </div>
    <svg class="ruler hruler" id="hruler"></svg>
    <svg class="ruler vruler" id="vruler"></svg>
    <div class="canvas">
      <svg class="drawing" width="100%" height="100%">
        <defs>
          <path id="piece" d="M651 338.500C690 349 735 356 764 356.300C815 356 845 338 846 296H1178C1180 347 1205 392 1217 417C1227 437 1232 457 1232 492V665C1232 700 1227 720 1217 740C1205 765 1180 810 1178 861H846C845 818 815 800.500 764 800.300C735 800.500 690 807 651 818L604.500 661.500C635 655 659 626 659 578.500C659 530 635 502 604.500 495.500Z"/>
          <clipPath id="inside"><use href="#piece"/></clipPath>
        </defs>
        <g transform="translate(-256 -180)">
          <path d="M502 197H1291A44 44 0 0 1 1335 241V916A44 44 0 0 1 1291 960H502Z" fill="#add6d6" stroke="#000" stroke-width="2"/>
          <path d="M546.500 241.500H1290.500V915.500H546.500Z" fill="none" stroke="#111" stroke-width="1"/>
          <g clip-path="url(#inside)" fill="none"><g id="quilt"></g><path d="M600 577.700L1200 261.900" stroke="#f80510" stroke-width="4"/></g>
          <use href="#piece" fill="none" stroke="#000" stroke-width="2"/>
          <g id="starts" fill="#f80510"></g>
          <path d="M502 876.500H612" stroke="#000" stroke-width="1"/>
          <path d="M608 868v17l5-6V868" fill="none" stroke="#000" stroke-width="1"/><path d="M607 873h3l3 4-3 4h-3z" fill="#0a0a90" stroke="#000" stroke-width="1"/>
          <path d="M1240 578h4M1241 576v4" stroke="#111" stroke-width="1.500"/>
          <circle cx="1014" cy="251.500" r="9" fill="none" stroke="#0a0aff" stroke-width="2.500"/>
          <g class="num">
            <text x="1012" y="254" class="tiny">P</text>
            <text x="622" y="368">6</text><text x="822" y="311">8</text><text x="1007" y="289">10</text><text x="990" y="309">11</text>
            <text x="1195" y="363">13</text><text x="1224" y="441">9</text><text x="622" y="529">4</text><text x="633" y="578" class="hot">12</text>
            <text x="1238" y="612">7</text><text x="1238" y="664">17</text><text x="1224" y="766">5</text><text x="1143" y="885">3</text>
            <text x="965" y="890">18</text><text x="768" y="831">16</text><text x="601" y="757">14</text><text x="581" y="670">2</text><text x="600" y="906">1</text>
          </g>
        </g>
      </svg>
      <form class="dialog">
        <header><h3>自动排列缝制顺序</h3><button type="button" aria-label="关闭"><svg viewBox="0 0 14 14"><path d="M1 1l12 12M13 1L1 13" stroke="#222" stroke-width="1"/></svg></button></header>
        <div class="body">
          <div class="boxes">
            <fieldset><legend>操作范围</legend>
              <label><input type="radio" name="scope">全部缝制线</label>
              <label><input type="radio" name="scope" checked>仅平行的缝制线</label>
            </fieldset>
            <fieldset><legend>排列效果</legend>
              <label><input type="radio" name="effect" aria-label="同向"><svg class="rows" viewBox="0 0 36 20"><path d="M4 3.500h31M4 10.500h31M4 17.500h31" stroke="#222" stroke-width="1"/><path d="M9 1l4 2.500L9 6zM18 1l4 2.500L18 6zM26 1l4 2.500L26 6zM9 8l4 2.500L9 13zM18 8l4 2.500L18 13zM26 8l4 2.500L26 13zM9 15l4 2.500L9 20zM18 15l4 2.500L18 20zM26 15l4 2.500L26 20z" fill="#f00" stroke="none"/><path d="M1.500 1v5M0 8h2v2.500H.5V13H2M0 15h2v5H0M0 17.500h2" stroke="#f00" stroke-width="1"/></svg></label>
              <label><input type="radio" name="effect" aria-label="往复" checked><svg class="rows" viewBox="0 0 36 20"><path d="M4 3.500h31M0 10.500h31M4 17.500h31" stroke="#222" stroke-width="1"/><path d="M9 1l4 2.500L9 6zM18 1l4 2.500L18 6zM26 1l4 2.500L26 6zM8 8l-4 2.500L8 13zM17 8l-4 2.500 4 2.500zM25 8l-4 2.500 4 2.500zM9 15l4 2.500L9 20zM18 15l4 2.500L18 20zM26 15l4 2.500L26 20z" fill="#f00" stroke="none"/><path d="M1.500 1v5M33 8h2v2.500h-1.500V13H35M0 15h2v5H0M0 17.500h2" stroke="#f00" stroke-width="1"/></svg></label>
            </fieldset>
          </div>
          <div class="line"><label for="from">开始序号</label><input id="from" type="text" value="1"><button type="button" class="push default">确定</button></div>
          <div class="line"><label for="to">结束序号</label><input id="to" type="text" value="8" readonly><button type="button" class="push">取消</button></div>
        </div>
      </form>
    </div>
  </section>

  <section class="side props">
    <header class="caption"><h2>工具属性栏</h2>
      <button aria-label="固定"><svg viewBox="0 0 12 12"><path d="M3 2h6M4 2v5M8 2v5M2 7h8M6 7v4" stroke="#000" stroke-width="1.500"/></svg></button>
      <button aria-label="关闭"><svg viewBox="0 0 12 12"><path d="M2 1l9 9M11 1l-9 9" stroke="#000"/></svg></button>
    </header>
    <div class="frame">
      <form class="options">
        <label class="tall"><input type="radio" name="mode">缝制模板</label>
        <label class="tall"><input type="radio" name="mode">剪线并暂停</label>
        <label><input type="radio" name="mode">对位点</label>
        <label><input type="radio" name="mode" checked>序号与切割参数</label>
        <label class="sub"><input type="radio" name="seq" checked>设置缝制序号</label>
        <div class="pair"><label class="sub"><input type="radio" name="seq">设置切割序号</label><input type="text" readonly aria-label="切割序号"></div>
        <label class="sub short"><input type="radio" name="seq">更换切割方向</label>
        <label class="sub"><input type="radio" name="seq">指定切割起点</label>
        <label><input type="radio" name="mode">压线</label>
        <label class="tall"><input type="radio" name="mode">针步属性</label>
        <label><input type="radio" name="mode">主题库</label>
        <button type="button" class="push default wide">自动输出缝制文件</button>
        <button type="button" class="push wide">传送缝制文件到机器</button>
      </form>
    </div>
    <div class="tabs"><button>纸样...</button><button>点放...</button><button class="current">工具...</button><button>长度...</button><button>参照...</button><button>款式...</button></div>
  </section>
</main>

<footer class="status"><p>框选被排列的缝制线,并靠近头点单击起始的缝制线</p><span>1/10</span><span class="cell"><svg viewBox="0 0 12 14"><path d="M1 1h3v3H1z" fill="#c87848"/><path d="M8 1h3v3H8z" fill="#0d0"/><path d="M1 9h3v3H1z" fill="#00e"/><path d="M8 9h3v3H8z" fill="#e00"/></svg></span><span class="cell">cm</span></footer>
<script src="script.js"></script>
</body>
</html>
```
FILE: styles.css
```css
* { box-sizing: border-box; }
body {
  margin: 0;
  min-height: 100vh;
  display: flex;
  flex-direction: column;
  background: #ebeefb;
  color: #000;
  font: 14px/20px "Open Sans", "Noto Sans CJK SC", sans-serif;
}
h2, h3, p, figure, form { margin: 0; font-weight: 400; }
button, input { font: inherit; color: inherit; }
button { padding: 0; border: 0; background: none; }
svg { display: block; fill: none; }
.defs { position: absolute; }

.menubar {
  height: 41px;
  display: flex;
  align-items: center;
  gap: 15px;
  padding: 0 15px 4px;
  border-top: 2px solid #fff;
  background: linear-gradient(90deg, #ebebfb, #f3f7fe);
}
.menubar a { color: #000; text-decoration: none; }

.toolbar {
  height: 41px;
  display: flex;
  align-items: center;
  padding: 0 0 3px 9px;
  background: linear-gradient(#f3f8fd 10%, #dcdde8 50%, #b2b3c8);
}
.toolbar button { flex: none; width: 43px; height: 38px; stroke-width: 2; }
.toolbar .on, .group .on { background: #d3e6f5; outline: 1px solid #0078d7; outline-offset: -1px; }
.toolbar .caret { display: grid; place-items: center; }
.caret svg { width: 8px; }
.toolbar .undo-caret { width: 16px; }
.toolbar .redo-caret { width: 14px; }
.wheel {
  display: block;
  width: 28px;
  height: 28px;
  margin: 0 auto;
  border-radius: 50%;
  background: conic-gradient(#f0208c, #f03020, #f09018, #e8e820, #58d820, #18d890, #18b0e8, #2038f0, #a020e8, #f0208c);
  -webkit-mask: radial-gradient(circle, transparent 7px, #000 8px);
  mask: radial-gradient(circle, transparent 7px, #000 8px);
}
.size { width: 33px; height: 26px; margin-left: 2px; padding: 0 2px 8px; border: 0; background: #fff; }
.toolbar .bulb { width: 32px; padding: 7px 6px 7px 6px; }
.bulb svg { width: 24px; }
.toolbar .swatch { width: 13px; height: 13px; background: #000; }
.toolbar .letter { width: 38px; margin-left: 17px; padding-top: 6px; font-size: 15px; }
.toolbar .linestyle { width: 86px; margin-left: 10px; }
.linestyle + button { margin-left: -3px; }

.workspace { flex: 1; display: grid; grid-template-columns: 226px minmax(0, 1fr) 334px; gap: 4px; }
.side { display: flex; flex-direction: column; min-width: 0; }
.caption {
  height: 29px;
  display: flex;
  align-items: center;
  gap: 6px;
  padding: 0 5px 2px 4px;
  background: linear-gradient(#bccad8, #dae8f4);
}
.caption h2 { flex: 1; font-size: 14px; }
.caption button { width: 12px; height: 12px; stroke-width: 2; }
.frame { flex: 1; padding: 3px; border: 1px solid #a0a0a0; background: #f6f9fe; }
.tools { display: flex; flex-direction: column; }
.group {
  display: grid;
  grid-template-columns: repeat(5, 43px);
  grid-auto-rows: 38px;
  align-content: start;
  padding: 1px 1px 6px;
  background: linear-gradient(#f5f9fd 10%, #dcdde8 52%, #b0b1c7);
  stroke-width: 4;
}
.rest { flex: 1; }
.group .k { stroke: #222; }
.group .b { stroke: #1c88c4; }
.group .o { stroke: #f47c4c; }
.group .r { stroke: #ee2028; }
.group .g { stroke: #188020; }
.group .n { stroke: #3a3aa0; }
.group .sq { fill: #fff; stroke: #111; }
.group .y { fill: #f4e020; stroke: #222; }

.tabs { display: flex; height: 29px; padding: 0 2px 2px; color: #6d6d6d; }
.tabs button { height: 26px; padding: 0 6px; border: 1px solid #d9d9d9; border-top: 0; border-left: 0; background: #f0f0f0; white-space: nowrap; }
.tabs .current { height: 27px; background: #fff; color: #000; }
.props .tabs button { width: 54px; padding: 0 3px 0 0; }

.center {
  display: grid;
  grid-template: 72px 25px minmax(0, 1fr) / 25px minmax(0, 1fr);
  min-width: 0;
}
.strip {
  grid-column: 1 / -1;
  display: flex;
  padding: 0 0 0 1px;
  border-top: 2px solid #6f6f74;
  border-bottom: 2px solid #fff;
  border-right: 2px solid #f4f6fb;
  background: #8fa4bb;
  font: 13px/20px "DejaVu Sans", sans-serif;
}
.strip figure { width: 68px; padding-top: 1px; border-left: 1px solid #666; border-right: 1px solid #fff; color: #ffe600; overflow: hidden; }
.strip svg { width: 66px; height: 30px; background: #0010ff; stroke: #ffe600; stroke-width: 1; shape-rendering: crispEdges; }
.strip figcaption { margin: 2px 6px 0 2px; overflow: hidden; white-space: nowrap; }
.strip p { display: flex; justify-content: space-between; margin-top: -3px; padding: 0 7px 0 2px; }
.strip b { color: #000; font-weight: 400; }
.ruler { width: 100%; height: 100%; background: #adc1ce; stroke-width: 1; }
.ruler text { fill: #000; font: 10px "DejaVu Sans Mono", monospace; }
.hruler { grid-column: 1 / -1; }
.canvas {
  position: relative;
  margin-bottom: 2px;
  border: 1px solid #6f6f74;
  border-width: 1px 0 0 1px;
  background: #83a2bc;
  box-shadow: inset -2px 0 #f4f6fb, 0 2px #fff;
}
.drawing { position: absolute; }
.num text { fill: #1c1cff; font: 12px "DejaVu Sans", sans-serif; }
.num .tiny { font-size: 8px; }
.num .hot { fill: #e00828; }

.dialog {
  position: absolute;
  top: 91px;
  right: -2px;
  width: 346px;
  border: 1px solid #4a5a5a;
  background: #f0f0f0;
  box-shadow: 2px 3px 14px rgba(0, 0, 0, .45);
  font-family: "Noto Sans CJK SC", sans-serif;
}
.dialog header { height: 30px; display: flex; align-items: center; padding: 0 14px 0 4px; background: #fff; }
.dialog h3 { flex: 1; font-size: 15px; }
.dialog header button { width: 14px; height: 14px; }
.body { padding: 12px 15px 18px 16px; font-size: 17px; font-weight: 300; line-height: 24px; }
.boxes { display: grid; grid-template-columns: 188px 116px; gap: 8px; margin-bottom: 10px; }
fieldset { min-width: 0; height: 107px; margin: 0; padding: 2px 0 0 16px; border: 1px solid #a0a0a0; }
legend { margin-left: -9px; padding: 0 3px; }
fieldset label { display: flex; align-items: center; gap: 8px; height: 38px; }
.rows { width: 36px; height: 20px; margin: -6px 0 0 18px; }
.line { display: flex; align-items: center; height: 30px; margin-bottom: 12px; padding-left: 9px; }
.line label { width: 79px; padding-bottom: 2px; }
.line .push { width: 79px; margin-left: auto; }
.line:last-child { margin-bottom: 0; }
input[type="radio"] {
  appearance: none;
  flex: none;
  width: 13px;
  height: 13px;
  margin: 0;
  border: 1px solid;
  border-color: #707070 #fff #fff #707070;
  border-radius: 50%;
  background: #fff;
}
input[type="radio"]:checked { background: radial-gradient(circle, #000 3px, #fff 4px); }
.line input, .pair > input {
  width: 79px;
  height: 30px;
  padding: 0 2px 4px;
  border: 1px solid;
  border-color: #a0a0a0 #fff #fff #a0a0a0;
  background: #fff;
  box-shadow: inset 1px 1px #696969, inset -1px -1px #e3e3e3;
}
.line input[readonly], .pair > input { background: #f0f0f0; }
.push {
  height: 30px;
  padding-bottom: 2px;
  border: 1px solid;
  border-color: #fff #696969 #696969 #fff;
  background: #f0f0f0;
  box-shadow: inset -1px -1px #a0a0a0;
  font-weight: 300;
  white-space: nowrap;
}
.push.default { border-color: #646464; box-shadow: inset 1px 1px #fff, inset -1px -1px #696969, inset -2px -2px #a0a0a0; }

.options {
  height: 100%;
  display: flex;
  flex-direction: column;
  align-items: flex-start;
  margin-right: 1px;
  padding: 16px 0 0 26px;
  border: 1px solid #696969;
  background: #f0f0f0;
  font: 300 17px/24px "Noto Sans CJK SC", sans-serif;
}
.options label { display: flex; align-items: center; gap: 8px; height: 30px; padding-bottom: 1px; white-space: nowrap; }
.options .tall { height: 32px; }
.options .short { height: 28px; }
.options .sub { padding-left: 25px; }
.pair { display: flex; gap: 18px; }
.push.wide { width: 162px; }
label + .wide { margin: 20px 0 10px; }

.status { display: flex; align-items: center; height: 25px; padding-left: 4px; border-top: 1px solid #d9d9d9; background: #f0f0f0; }
.status p { flex: 1; }
.status span { margin-right: 12px; }
.status .cell { display: flex; align-items: center; height: 22px; margin: 0; padding: 0 2px 0 4px; border-left: 1px solid #d0d0d0; }
.status .cell:last-child { width: 33px; }
.status svg { width: 12px; height: 14px; }
```
FILE: script.js
```js
const NS = 'http://www.w3.org/2000/svg';

function add(parent, name, attrs, text) {
  const el = document.createElementNS(NS, name);
  for (const key in attrs) el.setAttribute(key, attrs[key]);
  if (text) el.textContent = text;
  parent.appendChild(el);
}

// Ten ticks to every eight centimetres of cloth.
const STEP = 7.167;

function drawRulers() {
  const h = document.getElementById('hruler');
  const v = document.getElementById('vruler');
  h.replaceChildren();
  v.replaceChildren();
  const width = h.clientWidth, height = v.clientHeight;

  let d = '';
  for (let n = -8; 83 + n * STEP < width - 6; n++) {
    const x = Math.round(83 + n * STEP) + 0.5;
    const size = n % 10 === 0 ? 10 : n % 5 === 0 ? 8 : 4;
    d += `M${x} 25v-${size}`;
    if (n % 10 === 0) add(h, 'text', { x: x - 1, y: 11 }, String(-184 + n / 10 * 8).replace('-', '−'));
  }
  add(h, 'text', { x: width - 14, y: 11 }, 'cm');
  d += 'M870.5 0v25';
  add(h, 'path', { d, stroke: '#000' });

  d = 'M0 132.5h25';
  for (let n = -3; 23 + n * STEP < height - 26; n++) {
    const y = Math.round(23 + n * STEP) + 0.5;
    const size = n % 10 === 0 ? 10 : n % 5 === 0 ? 8 : 4;
    d += `M25 ${y}h-${size}`;
    if (n % 10 === 0) add(v, 'text', { transform: `translate(12 ${y + 8}) rotate(-90)` }, String(-160 - n / 10 * 8).replace('-', '−'));
  }
  add(v, 'path', { d, stroke: '#000' });
}

// Diamond quilting: parallel stitch lines in both directions, cut off by the piece outline.
function drawQuilt() {
  const g = document.getElementById('quilt');
  const slope = 0.5263, rise = slope * 400;
  for (let m = -4; m <= 4; m++) {
    const y = 578.3 + 81 * m;
    const lines = [];
    if (m < 4) lines.push(`M507.800 ${y - rise}L1307.800 ${y + rise}`);
    if (m > -4 && m !== -2) lines.push(`M507.800 ${y + rise}L1307.800 ${y - rise}`);
    for (const d of lines) {
      add(g, 'path', { d, stroke: '#d8103c', 'stroke-width': 3 });
      add(g, 'path', { d, stroke: '#0808ff', 'stroke-width': 3, 'stroke-dasharray': '5 3' });
    }
  }
  const starts = [[645, 359], [845, 303], [982, 295], [1188, 349], [1217, 416], [1231, 488], [1232, 586], [1231, 650],
    [1217, 740], [1136, 860], [986, 860], [791, 801], [623, 727], [603, 662], [655, 548], [643, 521]];
  for (const [x, y] of starts) add(document.getElementById('starts'), 'rect', { x: x - 3, y: y - 3, width: 7, height: 7 });
}

drawQuilt();
drawRulers();
addEventListener('resize', drawRulers);
```
